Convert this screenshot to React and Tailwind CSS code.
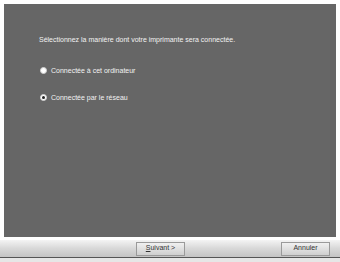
import React from 'react';

function Radio({ checked }) {
  return (
    <span className="flex h-[7px] w-[7px] items-center justify-center rounded-full border border-[#cfcfcf] bg-white">
      {checked && <span className="h-[3px] w-[3px] rounded-full bg-[#222]" />}
    </span>
  );
}

export default function App() {
  return (
    <div
      className="flex h-[262px] w-[340px] flex-col bg-white text-[7px] text-[#f2f2f2]"
      style={{ fontFamily: '"Liberation Sans", Arial, sans-serif' }}
    >
      <div className="ml-[4px] mt-[4px] mr-[4px] flex h-[233px] flex-col bg-[#666666] pl-[35px] pt-[31px]">
        <p className="leading-[9px]">Sélectionnez la manière dont votre imprimante sera connectée.</p>
        <div className="mt-[22px] flex items-center gap-[4px] pl-[1px]">
          <Radio />
          <span className="leading-[9px]">Connectée à cet ordinateur</span>
        </div>
        <div className="mt-[18px] flex items-center gap-[4px] pl-[1px]">
          <Radio checked />
          <span className="leading-[9px]">Connectée par le réseau</span>
        </div>
      </div>
      <div className="h-[3px]" />
      <div className="flex h-[18px] items-center border-b border-[#555] bg-gradient-to-b from-[#f4f4f4] via-[#d8d8d8] to-[#c4c4c4] px-[4px] text-[#333]">
        <div className="w-[132px]" />
        <button className="flex h-[14px] w-[49px] items-center justify-center border border-[#9a9a9a] bg-gradient-to-b from-[#f0f0f0] to-[#cfcfcf]">
          <span><span className="underline">S</span>uivant &gt;</span>
        </button>
        <div className="flex-1" />
        <button className="mr-[6px] flex h-[14px] w-[49px] items-center justify-center border border-[#9a9a9a] bg-gradient-to-b from-[#f0f0f0] to-[#cfcfcf]">
          Annuler
        </button>
      </div>
      <div className="flex-1 bg-[#e6e6e6]" />
    </div>
  );
}
